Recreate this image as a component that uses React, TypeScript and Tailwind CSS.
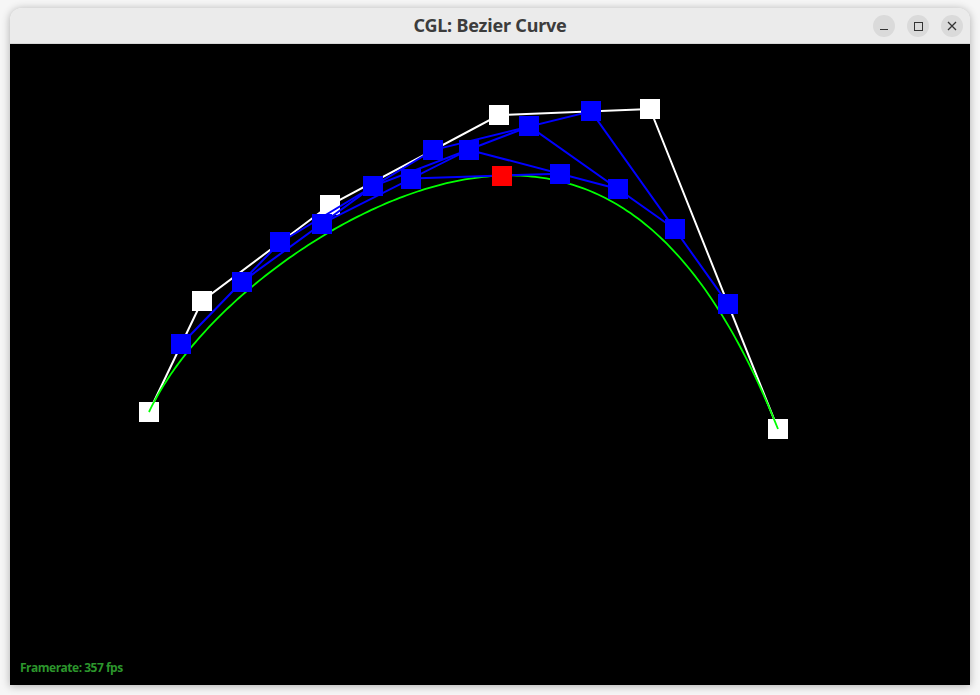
import React from 'react';

type Pt = [number, number];

// control polygon, in page coordinates
const controlPoints: Pt[] = [
  [149, 412],
  [202, 301],
  [330, 205],
  [499, 115],
  [650, 109],
  [778, 429],
];

const T = 0.61;

const lerp = (a: Pt, b: Pt, t: number): Pt => [a[0] + (b[0] - a[0]) * t, a[1] + (b[1] - a[1]) * t];

// de Casteljau levels, level 0 = control points
const levels = (pts: Pt[], t: number): Pt[][] => {
  const out: Pt[][] = [pts];
  let cur = pts;
  while (cur.length > 1) {
    const next: Pt[] = [];
    for (let i = 0; i < cur.length - 1; i++) next.push(lerp(cur[i], cur[i + 1], t));
    out.push(next);
    cur = next;
  }
  return out;
};

const evalCurve = (pts: Pt[], t: number): Pt => {
  const l = levels(pts, t);
  return l[l.length - 1][0];
};

const toPath = (pts: Pt[]) => pts.map((p, i) => `${i ? 'L' : 'M'}${p[0].toFixed(2)} ${p[1].toFixed(2)}`).join(' ');

const Square: React.FC<{ p: Pt; fill: string }> = ({ p, fill }) => (
  <rect x={Math.round(p[0]) - 10} y={Math.round(p[1]) - 10} width={20} height={20} fill={fill} />
);

const BezierCanvas: React.FC = () => {
  const lv = levels(controlPoints, T);
  const curve: Pt[] = [];
  for (let i = 0; i <= 200; i++) curve.push(evalCurve(controlPoints, i / 200));
  const inner = lv.slice(1, lv.length - 1);
  const last = lv[lv.length - 1][0];

  return (
    <svg className="absolute inset-0" width={960} height={641} viewBox="10 44 960 641">
      <path d={toPath(controlPoints)} stroke="#ffffff" strokeWidth={2} fill="none" />
      {controlPoints.map((p, i) => (
        <Square key={i} p={p} fill="#ffffff" />
      ))}
      <path d={toPath(curve)} stroke="#00ff00" strokeWidth={1.8} fill="none" />
      {inner.map((row, i) => (
        <path key={i} d={toPath(row)} stroke="#0000ff" strokeWidth={2} fill="none" />
      ))}
      {inner.map((row, i) => row.map((p, j) => <Square key={`${i}-${j}`} p={p} fill="#0000ff" />))}
      <Square p={last} fill="#ff0000" />
    </svg>
  );
};

const WinButton: React.FC<{ children: React.ReactNode }> = ({ children }) => (
  <div className="w-[22px] h-[22px] rounded-full bg-[#dadada] flex items-center justify-center">{children}</div>
);

export default function App() {
  return (
    <div className="w-[980px] h-[695px] bg-[#f6f6f6] pt-[8px] px-[10px]">
      <div className="w-[960px] rounded-t-[12px] overflow-hidden shadow-[0_1px_8px_rgba(0,0,0,0.3)]">
        <div className="relative h-[36px] bg-[#ebebeb] border-b border-[#d6d6d6] flex items-center justify-center">
          <span
            className="text-[18px] font-bold text-[#3c3c3c] tracking-[-0.2px]"
            style={{ fontFamily: '"Noto Sans", "DejaVu Sans", sans-serif' }}
          >
            CGL: Bezier Curve
          </span>
          <div className="absolute right-[7px] top-[7px] flex gap-[12px]">
            <WinButton>
              <div className="w-[8px] h-[1px] bg-[#333] mt-[7px]" />
            </WinButton>
            <WinButton>
              <div className="w-[9px] h-[9px] border border-[#333]" />
            </WinButton>
            <WinButton>
              <svg width="10" height="10" viewBox="0 0 10 10">
                <path d="M1 1 L9 9 M9 1 L1 9" stroke="#333" strokeWidth={1.3} />
              </svg>
            </WinButton>
          </div>
        </div>
        <div className="relative h-[641px] bg-black">
          <BezierCanvas />
          <div
            className="absolute left-[10px] bottom-[8px] text-[12px] font-bold text-[#2c962c] tracking-[-0.5px]"
            style={{ fontFamily: '"Open Sans", "Noto Sans", sans-serif' }}
          >
            Framerate: 357 fps
          </div>
        </div>
      </div>
    </div>
  );
}
